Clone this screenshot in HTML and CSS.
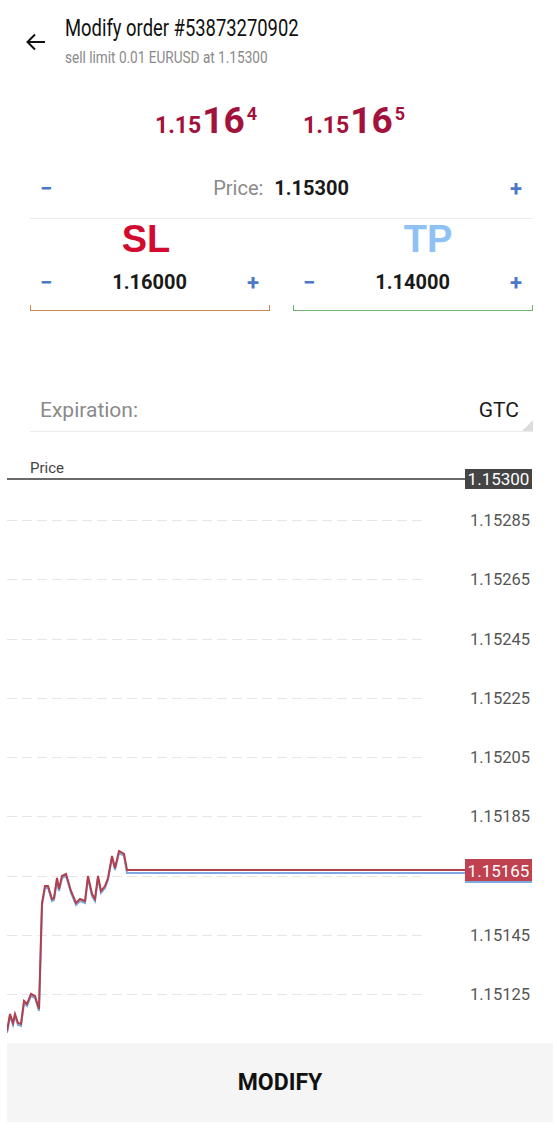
FILE: index.html
```html
<!DOCTYPE html>
<html lang="en">

<head>
  <meta charset="UTF-8">
  <meta name="viewport" content="width=device-width, initial-scale=1.0">
  <title>Modify order</title>
  <link rel="stylesheet" href="styles.css">
</head>

<body>
  <div id="container">
    <!-- 顶部标题 -->
    <div id="header">
      <div class="back">
        <svg width="24" height="24" viewBox="0 0 24 24">
          <path d="M21 12H3.5M11 4.5L3.5 12l7.5 7.5" fill="none" stroke="#111" stroke-width="2" />
        </svg>
      </div>
      <div class="titles">
        <div class="title">Modify order #53873270902</div>
        <div class="subtitle">sell limit 0.01 EURUSD at 1.15300</div>
      </div>
    </div>

    <!-- 报价 -->
    <div class="quotes">
      <div class="quote"><span class="q-small">1.15</span><span class="q-big">16</span><span class="q-sup">4</span></div>
      <div class="quote"><span class="q-small">1.15</span><span class="q-big">16</span><span class="q-sup">5</span></div>
    </div>

    <!-- 价格 -->
    <div class="price-row">
      <span class="step">&minus;</span>
      <div class="price-text"><span class="muted">Price:</span> <b>1.15300</b></div>
      <span class="step">+</span>
    </div>

    <div class="sltp-labels">
      <div class="sl-label">SL</div>
      <div class="tp-label">TP</div>
    </div>

    <div class="sltp">
      <div class="field">
        <div class="field-row">
          <span class="step">&minus;</span>
          <b>1.16000</b>
          <span class="step">+</span>
        </div>
        <div class="field-line sl-line"></div>
      </div>
      <div class="field">
        <div class="field-row">
          <span class="step">&minus;</span>
          <b>1.14000</b>
          <span class="step">+</span>
        </div>
        <div class="field-line tp-line"></div>
      </div>
    </div>

    <!-- 有效期 -->
    <div class="expiration">
      <span class="muted">Expiration:</span>
      <span>GTC</span>
    </div>

    <!-- 图表 -->
    <div class="chart">
      <div class="chart-head">
        <div class="caption">Price</div>
        <div class="level">
          <div class="level-line"></div>
          <div class="level-tag">1.15300</div>
        </div>
      </div>
      <div class="grid-row"><div class="dash"></div><span class="tick">1.15285</span></div>
      <div class="grid-row"><div class="dash"></div><span class="tick">1.15265</span></div>
      <div class="grid-row"><div class="dash"></div><span class="tick">1.15245</span></div>
      <div class="grid-row"><div class="dash"></div><span class="tick">1.15225</span></div>
      <div class="grid-row"><div class="dash"></div><span class="tick">1.15205</span></div>
      <div class="grid-row"><div class="dash"></div><span class="tick">1.15185</span></div>
      <div class="grid-row"><div class="dash"></div><span class="tick"></span></div>
      <div class="grid-row"><div class="dash"></div><span class="tick">1.15145</span></div>
      <div class="grid-row"><div class="dash"></div><span class="tick">1.15125</span></div>

      <svg class="series" width="546" height="588" viewBox="7 455 546 588">
        <polyline fill="none" stroke="#7ea9e2" stroke-width="2"
          points="7,1032 10,1015 13,1024 15,1015 18,1024 21,1025 24,1002 27,1005 31,995 35,997 39,1010 42,904 45,887 48,887 52,900 54,899 57,879 59,890 62,877 66,875 71,892 76,904 80,900 85,902 88,877 92,895 95,900 98,877 101,892 105,887 108,879 112,857 115,869 119,852 124,855 127,872 465,872" />
        <polyline fill="none" stroke="#b23f4c" stroke-width="2"
          points="7,1030 10,1013 13,1022 15,1013 18,1022 21,1023 24,1000 27,1003 31,993 35,995 39,1008 42,902 45,885 48,885 52,898 54,897 57,877 59,888 62,875 66,873 71,890 76,902 80,898 85,900 88,875 92,893 95,898 98,875 101,890 105,885 108,877 112,855 115,867 119,850 124,853 127,869 465,869" />
      </svg>
      <div class="current-tag">1.15165</div>
    </div>

    <div class="modify-button">MODIFY</div>
  </div>
</body>

</html>
```

FILE: styles.css
```css
body {
  margin: 0;
  padding: 0;
  font-family: Roboto, "Liberation Sans", sans-serif;
  background-color: #fff;
  color: #222;
}

#container {
  width: 559px;
  height: 1132px;
  padding: 0 6px 0 7px;
  box-sizing: border-box;
}

#header {
  display: flex;
  align-items: flex-start;
  height: 78px;
  padding-left: 17px;
}

.back {
  margin-top: 30px;
  width: 24px;
  height: 24px;
}

.titles {
  margin-left: 17px;
  padding-top: 14px;
  transform: scaleX(0.8);
  transform-origin: left top;
  white-space: nowrap;
}

.title {
  font-size: 23px;
  line-height: 30px;
  color: #111;
}

.subtitle {
  margin-top: 2px;
  font-size: 17px;
  line-height: 22px;
  color: #8a8a8a;
}

/* 报价 */
.quotes {
  display: flex;
  justify-content: center;
  gap: 46px;
  margin-top: 14px;
  height: 44px;
  line-height: 44px;
  color: #a3123c;
  font-weight: 700;
}

.q-small {
  font-size: 23px;
}

.q-big {
  font-size: 37px;
  margin-left: 1px;
}

.q-sup {
  font-size: 18px;
  vertical-align: 13px;
  margin-left: 2px;
}

/* 价格 */
.price-row {
  display: flex;
  justify-content: space-between;
  align-items: center;
  height: 52px;
  margin: 26px 20px 0 23px;
  padding: 0 11px 4px 10px;
  border-bottom: 1px solid #ebebeb;
  font-size: 20px;
}

.step {
  color: #4d78c8;
  font-weight: 700;
  font-size: 22px;
}

.muted {
  color: #8a8a8a;
}

.price-text b {
  margin-left: 6px;
  color: #1a1a1a;
}

.sltp-labels {
  display: grid;
  grid-template-columns: 1fr 1fr;
  column-gap: 23px;
  margin: 0 20px 0 23px;
  height: 40px;
  line-height: 40px;
  font-family: "Liberation Sans", Arial, sans-serif;
  font-weight: 700;
  font-size: 38px;
}

.sl-label {
  color: #d10a2e;
  text-align: center;
  padding-right: 8px;
}

.tp-label {
  color: #8ec2f4;
  text-align: center;
  padding-left: 30px;
}

.sltp {
  display: grid;
  grid-template-columns: 1fr 1fr;
  column-gap: 23px;
  margin: 0 20px 0 23px;
}

.field-row {
  display: flex;
  justify-content: space-between;
  align-items: center;
  height: 46px;
  padding: 0 11px 0 10px;
  font-size: 20px;
}

.field-row b {
  color: #1a1a1a;
}

.field-line {
  height: 5px;
  border: 1.5px solid;
  border-top: none;
}

.sl-line {
  border-color: #c98a4e;
}

.tp-line {
  border-color: #72b372;
}

/* 有效期 */
.expiration {
  position: relative;
  display: flex;
  justify-content: space-between;
  align-items: center;
  height: 45px;
  margin: 75px 20px 0 23px;
  padding: 0 14px 0 10px;
  border-bottom: 1px solid #ebebeb;
  font-size: 21px;
  color: #1a1a1a;
}

.expiration > span {
  margin-top: 2px;
}

.expiration::after {
  content: "";
  position: absolute;
  right: 0;
  bottom: 0;
  border-left: 11px solid transparent;
  border-bottom: 11px solid #dcdcdc;
}

/* 图表 */
.chart {
  position: relative;
  margin-top: 24px;
  height: 567px;
}

.chart-head {
  padding: 4px 0 2px;
}

.caption {
  margin-left: 23px;
  font-size: 15px;
  line-height: 16px;
  color: #444;
}

.level {
  display: flex;
  align-items: center;
  margin-top: -7px;
}

.level-line {
  flex: 1;
  height: 2px;
  background-color: #6a6a6a;
}

.level-tag {
  width: 67px;
  height: 20px;
  line-height: 20px;
  margin-right: 21px;
  background-color: #454545;
  color: #fff;
  font-size: 17px;
  text-align: center;
}

.grid-row {
  display: flex;
  align-items: center;
  height: 59.25px;
}

.dash {
  width: 415px;
  height: 1px;
  background-image: repeating-linear-gradient(to right, #e6e6e6 0 10px, transparent 10px 15px);
}

.tick {
  margin-left: auto;
  padding-right: 23px;
  font-size: 16.5px;
  color: #555;
}

.series {
  position: absolute;
  top: 0;
  left: 0;
}

.current-tag {
  position: absolute;
  top: 403px;
  right: 21px;
  width: 67px;
  height: 24px;
  line-height: 24px;
  background-color: #c0414f;
  border-bottom: 2px solid #7ea9e2;
  box-sizing: border-box;
  color: #fff;
  font-size: 17px;
  text-align: center;
}

.modify-button {
  margin-top: 20px;
  height: 79px;
  line-height: 79px;
  background-color: #f5f5f5;
  text-align: center;
  font-size: 23px;
  font-weight: 700;
  color: #111;
}
```
